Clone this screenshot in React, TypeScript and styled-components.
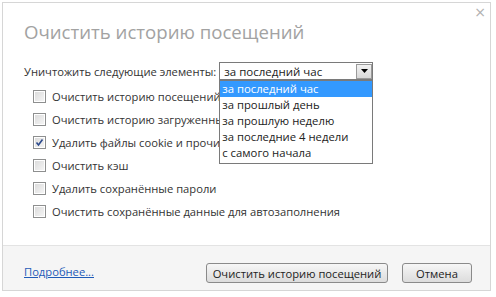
import React from "react";
import styled, { createGlobalStyle } from "styled-components";

const Global = createGlobalStyle`
  html, body { margin: 0; padding: 0; background: #ffffff; }
  body { font-family: "Open Sans", "Noto Sans", sans-serif; }
`;

const Page = styled.div`
  width: 496px;
  height: 297px;
  padding: 2px;
  box-sizing: border-box;
`;

const Dialog = styled.div`
  position: relative;
  width: 489px;
  height: 289px;
  box-sizing: border-box;
  border: 1px solid #d6d6d6;
  background: #ffffff;
  display: flex;
  flex-direction: column;
`;

const Close = styled.div`
  position: absolute;
  top: 1px;
  right: 4px;
  font-size: 14px;
  color: #b0b0b0;
  font-family: "DejaVu Sans", sans-serif;
`;

const Body = styled.div`
  flex: 1;
  padding: 17px 0 0 21px;
  display: flex;
  flex-direction: column;
`;

const Title = styled.div`
  font-size: 18.6px;
  color: #a2a2a2;
  line-height: 24px;
`;

const Text = styled.span`
  font-size: 11.2px;
  color: #333;
`;

const SelectRow = styled.div`
  margin-top: 18px;
  display: flex;
  align-items: center;
  gap: 3px;
`;

const SelectWrap = styled.div`
  position: relative;
`;

const SelectBox = styled.div`
  width: 154px;
  height: 18px;
  box-sizing: border-box;
  border: 1px solid #7a7a7a;
  display: flex;
  align-items: center;
  justify-content: space-between;
  padding-left: 4px;
  font-size: 11.5px;
  color: #222;
`;

const Arrow = styled.div`
  width: 16px;
  height: 15px;
  margin-right: 0px;
  box-sizing: border-box;
  border: 1px solid #9a9a9a;
  background: linear-gradient(#f2f2f2, #d8d8d8);
  display: flex;
  align-items: center;
  justify-content: center;
`;

const List = styled.ul`
  position: absolute;
  left: 0;
  top: 18px;
  width: 154px;
  margin: 0;
  padding: 0 0 2px;
  list-style: none;
  box-sizing: border-box;
  border: 1px solid #7a7a7a;
  background: #fff;
  z-index: 2;
`;

const Item = styled.li<{ $sel?: boolean }>`
  height: 16px;
  line-height: 16px;
  padding-left: 2px;
  font-size: 11.3px;
  color: ${(p) => (p.$sel ? "#fff" : "#222")};
  background: ${(p) => (p.$sel ? "#3399ff" : "transparent")};
`;

const Checks = styled.div`
  margin-top: 5px;
  padding-left: 9px;
  display: flex;
  flex-direction: column;
`;

const CheckRow = styled.label`
  height: 23px;
  display: flex;
  align-items: center;
  gap: 6px;
`;

const Box = styled.span`
  width: 13px;
  height: 13px;
  box-sizing: border-box;
  border: 1px solid #8e8f8f;
  background: #fff;
  padding: 1px;
  display: flex;
`;

const BoxInner = styled.span`
  flex: 1;
  background: linear-gradient(135deg, #dcdcdc, #f4f4f4);
  display: flex;
  align-items: center;
  justify-content: center;
`;

const Footer = styled.div`
  height: 45px;
  flex: none;
  border-top: 1px solid #e3e3e3;
  background: #f5f5f5;
  display: flex;
  align-items: flex-start;
  padding: 17px 18px 0 21px;
  box-sizing: border-box;
`;

const Link = styled.a`
  font-size: 11.2px;
  line-height: 18px;
  color: #1f5bb8;
  text-decoration: underline;
  margin-right: auto;
`;

const Button = styled.button<{ $w: number }>`
  width: ${(p) => p.$w}px;
  height: 20px;
  margin-left: 14px;
  border: 1px solid #8a8a8a;
  border-radius: 3px;
  background: linear-gradient(#f6f6f6, #dcdcdc);
  font-family: "Open Sans", "Noto Sans", sans-serif;
  font-size: 11.2px;
  color: #222;
  padding: 0;
`;

const items = ["за последний час", "за прошлый день", "за прошлую неделю", "за последние 4 недели", "с самого начала"];

const checks: [string, boolean][] = [
  ["Очистить историю посещений", false],
  ["Очистить историю загруженных файлов", false],
  ["Удалить файлы cookie и прочие данные сайтов", true],
  ["Очистить кэш", false],
  ["Удалить сохранённые пароли", false],
  ["Очистить сохранённые данные для автозаполнения", false],
];

export default function App() {
  return (
    <Page>
      <Global />
      <Dialog>
        <Close>×</Close>
        <Body>
          <Title>Очистить историю посещений</Title>
          <SelectRow>
            <Text>Уничтожить следующие элементы:</Text>
            <SelectWrap>
              <SelectBox>
                за последний час
                <Arrow>
                  <svg width="7" height="4" viewBox="0 0 7 4"><path d="M0 0h7L3.5 4z" fill="#000" /></svg>
                </Arrow>
              </SelectBox>
              <List>
                {items.map((t, i) => (
                  <Item key={t} $sel={i === 0}>{t}</Item>
                ))}
              </List>
            </SelectWrap>
          </SelectRow>
          <Checks>
            {checks.map(([t, c]) => (
              <CheckRow key={t}>
                <Box>
                  <BoxInner>
                    {c && (
                      <svg width="9" height="9" viewBox="0 0 9 9">
                        <path d="M1.5 4.5l2 2.5L7.5 1.5" stroke="#2c4a8c" strokeWidth="1.6" fill="none" />
                      </svg>
                    )}
                  </BoxInner>
                </Box>
                <Text>{t}</Text>
              </CheckRow>
            ))}
          </Checks>
        </Body>
        <Footer>
          <Link>Подробнее...</Link>
          <Button $w={182}>Очистить историю посещений</Button>
          <Button $w={70}>Отмена</Button>
        </Footer>
      </Dialog>
    </Page>
  );
}
